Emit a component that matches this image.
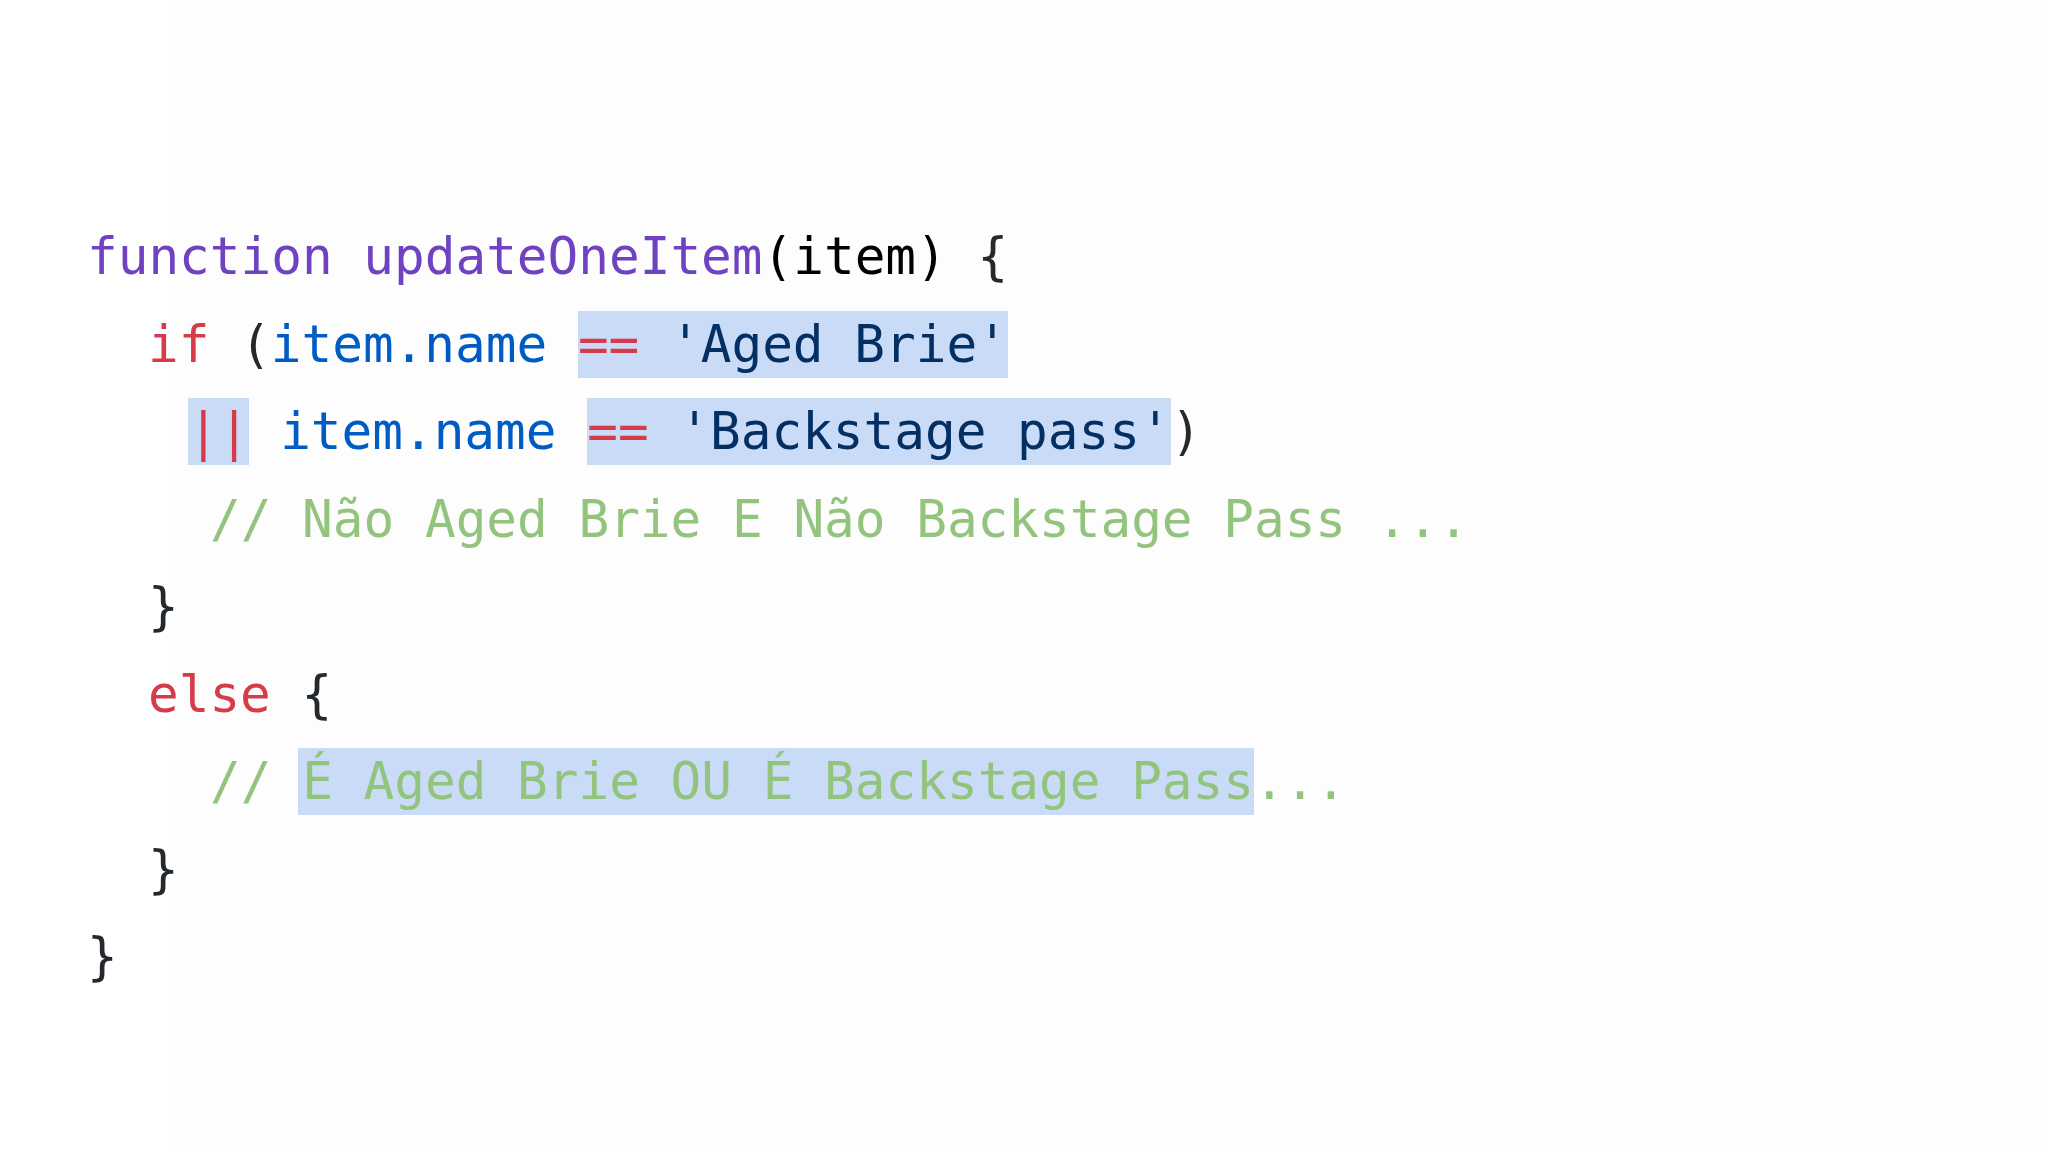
const hl = 'inline-block h-[67px] leading-[67px] bg-[#c9dbf7]';

export default function App() {
    return (
        <div className="min-h-[1152px] w-full bg-[linear-gradient(to_right,#ffffff_175px,#fdfdfd_175px)] pt-[213px] pl-[87px]">
            <pre
                className="text-[51px] leading-[87.5px] text-[#24292e] whitespace-pre"
                style={{ fontFamily: '"DejaVu Sans Mono", "Liberation Mono", monospace' }}
            >
                <div>
                    <span className="text-[#6f42c1]">function updateOneItem</span>
                    <span className="text-black">(item)</span> {'{'}
                </div>
                <div className="pl-[61px]">
                    <span className="text-[#d73a49]">if</span> (<span className="text-[#005cc5]">item.name</span>{' '}
                    <span className={hl}>
                        <span className="text-[#d73a49]">==</span> <span className="text-[#032f62]">'Aged Brie'</span>
                    </span>
                </div>
                <div className="pl-[101px]">
                    <span className={`${hl} text-[#d73a49]`}>||</span> <span className="text-[#005cc5]">item.name</span>{' '}
                    <span className={hl}>
                        <span className="text-[#d73a49]">==</span> <span className="text-[#032f62]">'Backstage pass'</span>
                    </span>
                    )
                </div>
                <div className="pl-[123px] text-[#93c47d]">// Não Aged Brie E Não Backstage Pass ...</div>
                <div className="pl-[61px]">{'}'}</div>
                <div className="pl-[61px]">
                    <span className="text-[#d73a49]">else</span> {'{'}
                </div>
                <div className="pl-[123px] text-[#93c47d]">
                    // <span className={`${hl} -ml-[4px] pl-[4px]`}>É Aged Brie OU É Backstage Pass</span>...
                </div>
                <div className="pl-[61px]">{'}'}</div>
                <div>{'}'}</div>
            </pre>
        </div>
    );
}
